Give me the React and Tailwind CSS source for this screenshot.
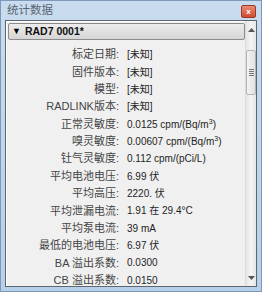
import React from "react";

const rows = [
  ["标定日期:", "[未知]"],
  ["固件版本:", "[未知]"],
  ["模型:", "[未知]"],
  ["RADLINK版本:", "[未知]"],
  ["正常灵敏度:", <>0.0125 cpm/(Bq/m<sup className="text-[7px]">3</sup>)</>],
  ["嗅灵敏度:", <>0.00607 cpm/(Bq/m<sup className="text-[7px]">3</sup>)</>],
  ["钍气灵敏度:", "0.112 cpm/(pCi/L)"],
  ["平均电池电压:", "6.99 伏"],
  ["平均高压:", "2220. 伏"],
  ["平均泄漏电流:", "1.91 在 29.4°C"],
  ["平均泵电流:", "39 mA"],
  ["最低的电池电压:", "6.97 伏"],
  ["BA 溢出系数:", "0.0300"],
  ["CB 溢出系数:", "0.0150"],
];

const App = () => {
  return (
    <div
      className="w-[262px] h-[292px] flex flex-col border border-[#7d98b8] bg-gradient-to-b from-[#c9dcef] to-[#b7cfe8] text-[10.5px]"
      style={{ fontFamily: '"Liberation Sans", "Noto Sans CJK SC", sans-serif' }}
    >
      {/* title bar */}
      <div className="h-[19px] flex items-center justify-between pl-[6px] pr-[5px]">
        <span className="text-[11.5px] text-[#5a6472]">统计数据</span>
        <div className="w-[15px] h-[13px] mt-[2px] rounded-[2px] bg-gradient-to-b from-[#e88a70] to-[#cf4a2e] border border-[#9c3a28] flex items-center justify-center">
          <span className="text-[8px] leading-none text-white font-bold">x</span>
        </div>
      </div>

      {/* panel */}
      <div className="flex-1 mx-[4px] mb-[4px] border border-[#5e6670] bg-[#f0f0f0] flex overflow-hidden">
        <div className="flex-1 flex flex-col border-t border-l border-white">
          <div className="mt-[1px] ml-[1px] h-[17px] rounded-[2px] border border-[#8c8c8c] bg-gradient-to-b from-[#ececec] to-[#d6d6d6] flex items-center pl-[3px] gap-[4px]">
            <span className="text-[9px] leading-none text-black">▼</span>
            <span className="font-bold text-[10.5px] text-[#111]">RAD7 0001*</span>
          </div>
          <div className="mt-[6px] flex flex-col">
            {rows.map(([label, value], i) => (
              <div key={i} className="h-[17.35px] flex items-center">
                <span className="w-[112px] text-right text-[11px] text-[#444] whitespace-nowrap">{label}</span>
                <span className="pl-[8px] text-[10px] text-[#1e1e1e] whitespace-nowrap">{value}</span>
              </div>
            ))}
          </div>
        </div>

        {/* scrollbar */}
        <div className="w-[11px] flex flex-col items-center bg-gradient-to-r from-[#e6e6e6] via-[#f4f4f4] to-[#e6e6e6] border-l border-[#dcdcdc]">
          <div className="h-[17px] flex items-center justify-center">
            <svg width="7" height="4" viewBox="0 0 7 4">
              <path d="M0 4 L3.5 0 L7 4 Z" fill="#555" />
            </svg>
          </div>
          <div className="mt-[12px] w-[10px] h-[45px] rounded-[2px] border border-[#b5b5b5] bg-gradient-to-r from-[#f2f2f2] to-[#e2e2e2] flex flex-col items-center justify-center gap-[1px]">
            <div className="w-[5px] h-[1px] bg-[#777]" />
            <div className="w-[5px] h-[1px] bg-[#777]" />
            <div className="w-[5px] h-[1px] bg-[#777]" />
            <div className="w-[5px] h-[1px] bg-[#777]" />
          </div>
          <div className="flex-1" />
          <div className="h-[17px] flex items-center justify-center">
            <svg width="7" height="4" viewBox="0 0 7 4">
              <path d="M0 0 L3.5 4 L7 0 Z" fill="#555" />
            </svg>
          </div>
        </div>
      </div>
    </div>
  );
};

export default App;
